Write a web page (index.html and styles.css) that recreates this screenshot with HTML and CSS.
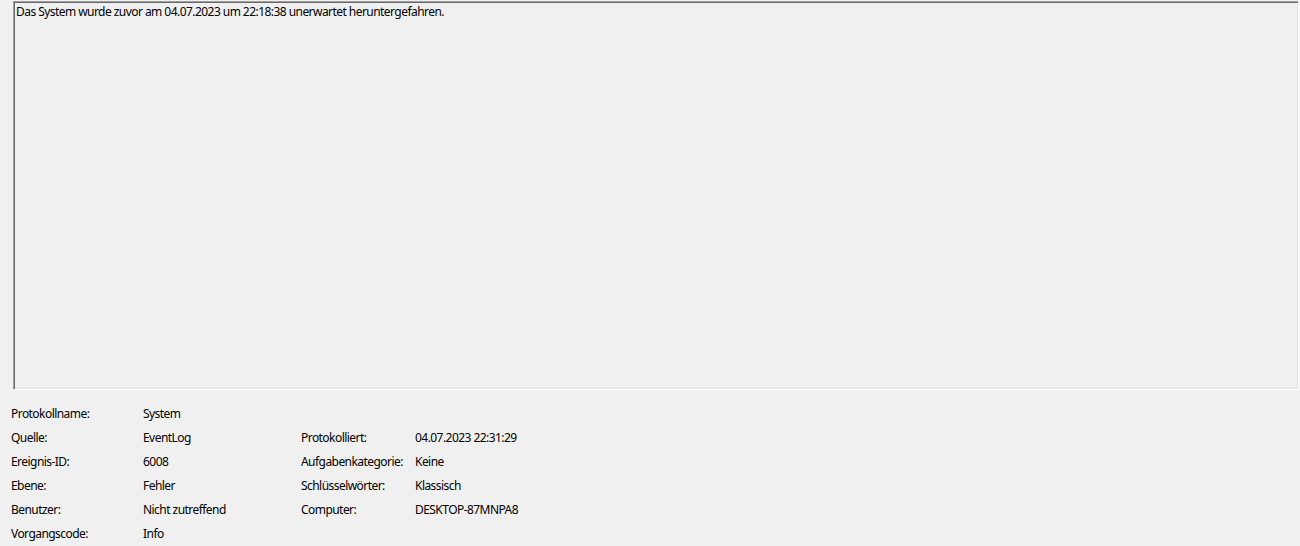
FILE: index.html
```html
<!DOCTYPE html>
<html lang="de">
<head>
<meta charset="utf-8">
<title>Ereignis</title>
<link rel="stylesheet" href="styles.css">
</head>
<body>
<div class="message">Das System wurde zuvor am 04.07.2023 um 22:18:38 unerwartet heruntergefahren.</div>
<div class="details">
  <div class="label">Protokollname:</div><div class="value">System</div><div class="label"></div><div class="value"></div>
  <div class="label">Quelle:</div><div class="value">EventLog</div><div class="label">Protokolliert:</div><div class="value">04.07.2023 22:31:29</div>
  <div class="label">Ereignis-ID:</div><div class="value">6008</div><div class="label">Aufgabenkategorie:</div><div class="value">Keine</div>
  <div class="label">Ebene:</div><div class="value">Fehler</div><div class="label">Schlüsselwörter:</div><div class="value">Klassisch</div>
  <div class="label">Benutzer:</div><div class="value">Nicht zutreffend</div><div class="label">Computer:</div><div class="value">DESKTOP-87MNPA8</div>
  <div class="label">Vorgangscode:</div><div class="value">Info</div><div class="label"></div><div class="value"></div>
</div>
</body>
</html>
```
FILE: styles.css
```css
html, body {
  margin: 0;
  padding: 0;
  background: #f0f0f0;
  height: 100%;
  overflow: hidden;
}
body {
  font-family: "Noto Sans", "Liberation Sans", sans-serif;
  font-size: 12px;
  letter-spacing: -0.55px;
  color: #000;
}
.message {
  box-sizing: border-box;
  margin: 1px 0 0 13px;
  width: 1286px;
  height: 389px;
  border: 1px solid;
  border-color: #a0a0a0 #ffffff #ffffff #a0a0a0;
  box-shadow: inset 1px 1px 0 #696969, inset -1px -1px 0 #e3e3e3;
  padding: 2px 2px;
  line-height: 16px;
  background: #f0f0f0;
}
.details {
  display: grid;
  grid-template-columns: 132px 158px 114px 1fr;
  grid-auto-rows: 24px;
  margin: 12px 0 0 11px;
  line-height: 24px;
}
.label, .value {
  white-space: nowrap;
}
```
